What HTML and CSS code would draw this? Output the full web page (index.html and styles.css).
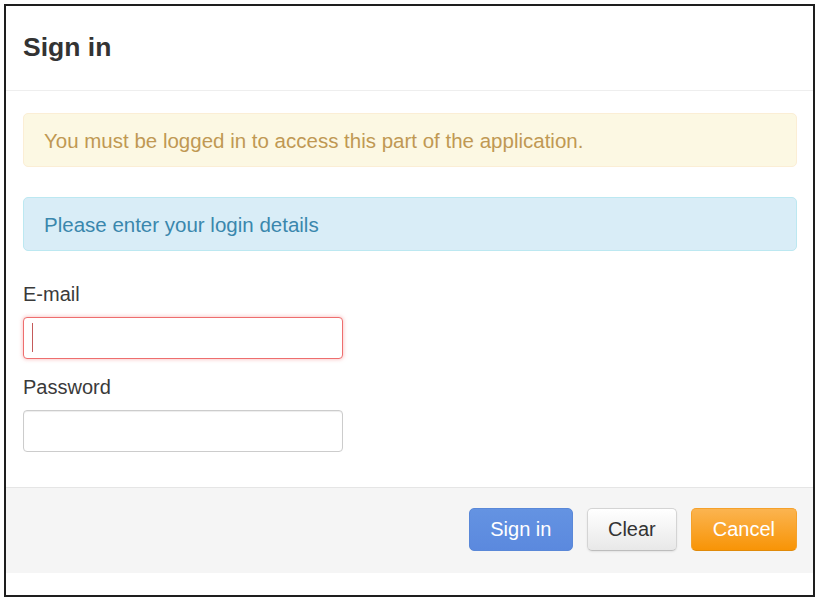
FILE: index.html
```html
<!DOCTYPE html>
<html>
<head>
<meta charset="utf-8">
<link rel="stylesheet" href="styles.css">
</head>
<body>
<div class="modal">
  <div class="modal-header">
    <h3 class="title">Sign in</h3>
  </div>
  <div class="modal-body">
    <div class="alert alert-warning">You must be logged in to access this part of the application.</div>
    <div class="alert alert-info">Please enter your login details</div>
    <label class="label" for="email">E-mail</label>
    <div class="field">
      <input id="email" class="input input-error" type="text">
      <span class="caret"></span>
    </div>
    <label class="label" for="password">Password</label>
    <div class="field">
      <input id="password" class="input" type="password">
    </div>
  </div>
  <div class="modal-footer">
    <button class="btn btn-primary">Sign in</button>
    <button class="btn btn-default">Clear</button>
    <button class="btn btn-warning">Cancel</button>
  </div>
</div>
</body>
</html>
```
FILE: styles.css
```css
* { box-sizing: border-box; }
html, body { margin: 0; padding: 0; background: #fff; }
body {
  font-family: "Liberation Sans", Arial, sans-serif;
  font-size: 20px;
  color: #333;
  padding: 4px;
}
.modal {
  width: 811px;
  border: 2px solid #1e1e1e;
  background: #fff;
  padding-bottom: 22px;
}
.modal-header {
  padding: 26px 17px 28px;
  border-bottom: 1px solid #eee;
}
.title {
  margin: 0;
  font-size: 26.5px;
  line-height: 30px;
  font-weight: bold;
  color: #333;
}
.modal-body {
  padding: 22px 16px 35px 17px;
  display: flex;
  flex-direction: column;
  align-items: flex-start;
}
.alert {
  width: 774px;
  height: 54px;
  padding: 0 20px;
  display: flex;
  align-items: center;
  border-radius: 5px;
  border: 1px solid;
  font-size: 20.5px;
  line-height: 29px;
}
.alert-warning {
  background: #fcf8e3;
  border-color: #fbeed5;
  color: #c09853;
  margin-bottom: 30px;
}
.alert-info {
  background: #d9edf7;
  border-color: #bce8f1;
  color: #3a87ad;
  margin-bottom: 29px;
}
.label {
  line-height: 29px;
  margin-bottom: 8px;
  color: #3a3a3a;
}
.field {
  position: relative;
  margin-bottom: 14px;
}
.field:last-child { margin-bottom: 0; }
.input {
  display: block;
  width: 320px;
  height: 42px;
  border: 1px solid #ccc;
  border-radius: 4px;
  box-shadow: inset 0 1px 1px rgba(0,0,0,0.075);
  font: inherit;
  padding: 0 8px;
  outline: none;
  background: #fff;
}
.input-error {
  border-color: #ee6e6e;
  box-shadow: 0 0 4px rgba(240, 120, 120, 0.55);
}
.caret {
  position: absolute;
  left: 9px;
  top: 6px;
  width: 1px;
  height: 29px;
  background: #c45a5a;
}
.modal-footer {
  border-top: 1px solid #e5e5e5;
  background: #f5f5f5;
  padding: 20px 16px 22px;
  display: flex;
  justify-content: flex-end;
  gap: 14px;
}
.btn {
  height: 43px;
  padding: 0 21px;
  font-family: inherit;
  font-size: 20px;
  border-radius: 5px;
  border: 1px solid;
  cursor: pointer;
}
.btn-primary {
  color: #fff;
  padding: 0 20.5px;
  background: linear-gradient(#6493e2, #5b89de);
  border-color: #5a88d8;
}
.btn-default {
  color: #333;
  padding: 0 20px;
  background: linear-gradient(#ffffff, #e8e8e8);
  border-color: #d4d4d4 #d4d4d4 #bdbdbd;
  box-shadow: 0 1px 2px rgba(0,0,0,0.08);
}
.btn-warning {
  color: #fff;
  background: linear-gradient(#fbb450, #f89406);
  border-color: #f5a12b #f5a12b #e08a0a;
}
```
